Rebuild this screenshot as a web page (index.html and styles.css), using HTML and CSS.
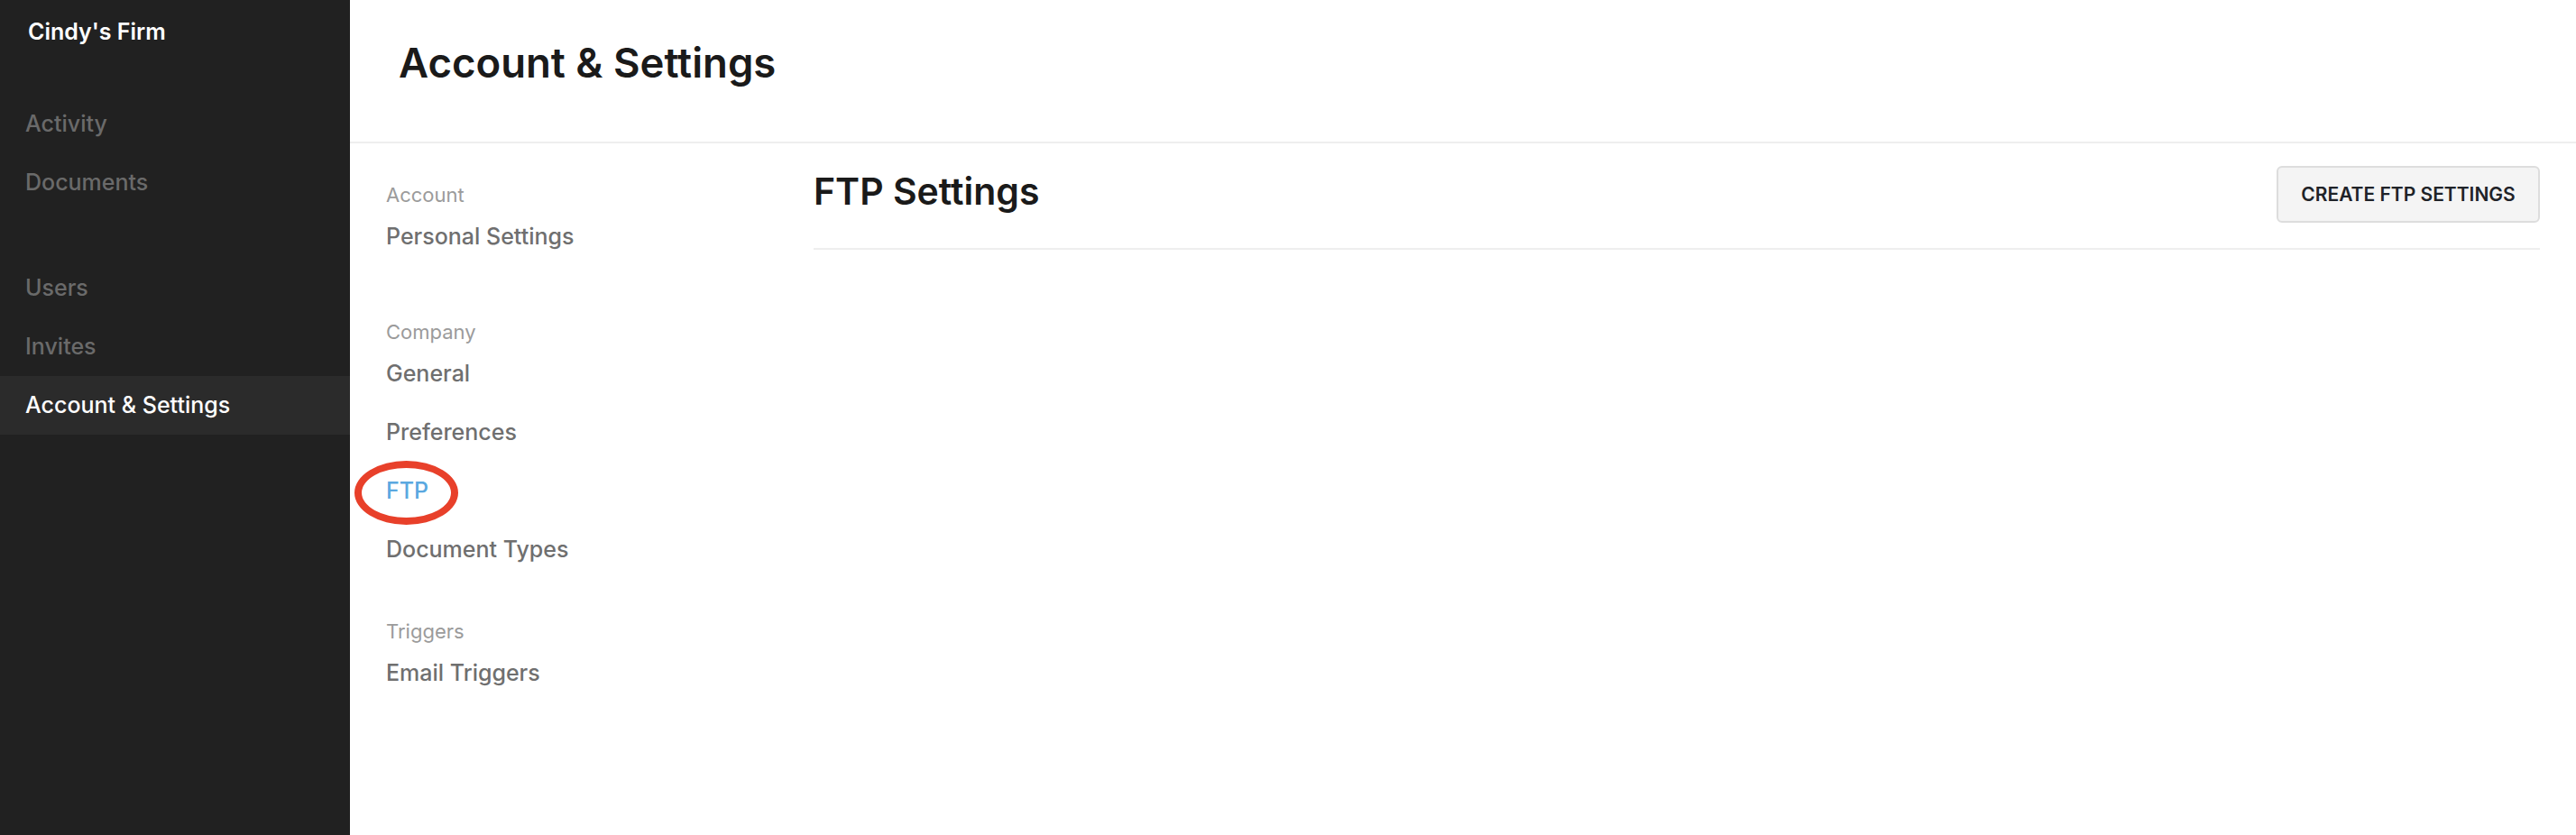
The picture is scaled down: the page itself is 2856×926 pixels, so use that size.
FILE: index.html
```html
<!DOCTYPE html>
<html lang="en">
<head>
<meta charset="utf-8">
<title>Account &amp; Settings</title>
<link rel="stylesheet" href="styles.css">
</head>
<body>
<div class="app">
  <aside class="sidebar">
    <div class="brand">Cindy's Firm</div>
    <nav class="side-nav">
      <div class="side-group">
        <a class="side-item">Activity</a>
        <a class="side-item">Documents</a>
      </div>
      <div class="side-group">
        <a class="side-item">Users</a>
        <a class="side-item">Invites</a>
        <a class="side-item side-item--active">Account &amp; Settings</a>
      </div>
    </nav>
  </aside>
  <main class="main">
    <header class="page-header">
      <h1 class="page-title">Account &amp; Settings</h1>
    </header>
    <div class="page-body">
      <nav class="subnav">
        <div class="subnav-section subnav-section--first">
          <div class="subnav-label">Account</div>
          <a class="subnav-item">Personal Settings</a>
        </div>
        <div class="subnav-section">
          <div class="subnav-label">Company</div>
          <a class="subnav-item">General</a>
          <a class="subnav-item">Preferences</a>
          <a class="subnav-item subnav-item--active">FTP<span class="annot"></span></a>
          <a class="subnav-item">Document Types</a>
        </div>
        <div class="subnav-section">
          <div class="subnav-label">Triggers</div>
          <a class="subnav-item">Email Triggers</a>
        </div>
      </nav>
      <section class="content">
        <div class="content-head">
          <h2 class="content-title">FTP Settings</h2>
          <button class="btn">CREATE FTP SETTINGS</button>
        </div>
      </section>
    </div>
  </main>
</div>
</body>
</html>
```

FILE: styles.css
```css
* { box-sizing: border-box; }
html, body {
  margin: 0;
  padding: 0;
  height: 100%;
  background: #ffffff;
  font-family: Inter, "Noto Sans", "Liberation Sans", sans-serif;
}
.app {
  display: flex;
  min-height: 926px;
}
.sidebar {
  width: 388px;
  flex: 0 0 388px;
  background: #212121;
}
.brand {
  padding: 19px 31px 54px;
  font-size: 25px;
  line-height: 32px;
  font-weight: 600;
  color: #ffffff;
}
.side-nav {
  display: flex;
  flex-direction: column;
  gap: 52px;
}
.side-group {
  display: flex;
  flex-direction: column;
}
.side-item {
  display: block;
  height: 65px;
  line-height: 65px;
  padding-left: 28px;
  font-size: 25px;
  font-weight: 500;
  color: #6a6a6a;
}
.side-item--active {
  background: #2b2b2b;
  color: #ffffff;
}
.main {
  flex: 1;
  display: flex;
  flex-direction: column;
  min-width: 0;
}
.page-header {
  height: 159px;
  padding: 41px 0 0 54px;
  border-bottom: 2px solid #eeeeee;
}
.page-title {
  margin: 0;
  font-size: 45.5px;
  line-height: 57px;
  font-weight: 600;
  color: #1a1a1a;
}
.page-body {
  display: flex;
  flex: 1;
}
.subnav {
  width: 514px;
  flex: 0 0 514px;
  padding: 43px 0 0 40px;
}
.subnav-section {
  display: flex;
  flex-direction: column;
  margin-bottom: 44px;
}
.subnav-section--first {
  margin-bottom: 59px;
}
.subnav-label {
  font-size: 22px;
  line-height: 28px;
  color: #9b9b9b;
}
.subnav-item {
  position: relative;
  display: block;
  height: 65px;
  line-height: 65px;
  font-size: 25px;
  font-weight: 500;
  color: #6f6f6f;
}
.subnav-item--active {
  color: #5aa8e0;
}
.annot {
  position: absolute;
  left: -35px;
  top: -1px;
  width: 115px;
  height: 71px;
  border: 8px solid #e8402a;
  border-radius: 50%;
}
.content {
  flex: 1;
  padding: 25px 40px 0 0;
}
.content-head {
  display: flex;
  justify-content: space-between;
  align-items: flex-start;
  padding-bottom: 28px;
  border-bottom: 2px solid #eeeeee;
}
.content-title {
  margin: 3px 0 0;
  font-size: 41px;
  line-height: 50px;
  font-weight: 600;
  color: #1a1a1a;
}
.btn {
  width: 292px;
  height: 63px;
  border: 2px solid #dddddd;
  border-radius: 6px;
  background: #f4f4f4;
  font-family: Inter, "Noto Sans", sans-serif;
  font-size: 21px;
  font-weight: 600;
  color: #1f2328;
  padding: 0;
}
```
